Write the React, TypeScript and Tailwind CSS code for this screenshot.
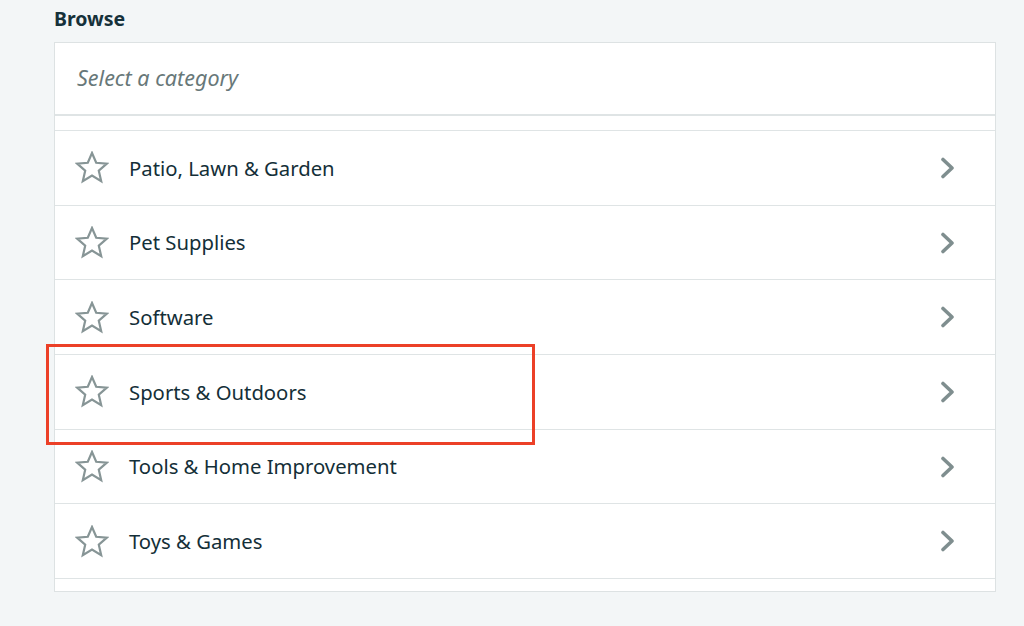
const categories = [
  "Patio, Lawn & Garden",
  "Pet Supplies",
  "Software",
  "Sports & Outdoors",
  "Tools & Home Improvement",
  "Toys & Games",
];

function StarIcon() {
  return (
    <svg width="34" height="33" viewBox="0 0 34 33" fill="none">
      <path
        d="M17 2l4.2 9.8 10.6.9-8 7 2.4 10.5L17 24.6 7.8 30.2l2.4-10.5-8-7 10.6-.9z"
        stroke="#879596"
        strokeWidth="2.2"
        strokeLinejoin="miter"
      />
    </svg>
  );
}

function Chevron() {
  return (
    <svg width="18" height="22" viewBox="0 0 18 22" fill="none">
      <path d="M4 2.5l9 8.5-9 8.5" stroke="#7f8e8f" strokeWidth="3.6" strokeLinecap="round" strokeLinejoin="round" />
    </svg>
  );
}

export default function App() {
  return (
    <div
      className="relative w-[1024px] h-[626px] bg-[#f3f6f7] overflow-hidden"
      style={{ fontFamily: '"Noto Sans", "Open Sans", sans-serif' }}
    >
      <div className="pl-[54px] pr-[28px] pt-[6px]">
        <h2 className="text-[19.5px] leading-[26px] font-bold text-[#16313a] mb-[10px]">Browse</h2>
        <div className="border border-[#dde2e3] bg-white">
          <div className="h-[73px] flex items-center px-[22px] border-b-2 border-[#dfe4e5]">
            <span className="italic text-[21.5px] text-[#687879]">Select a category</span>
          </div>
          <div className="h-[14px]" />
          {categories.map((c) => (
            <div key={c} className="h-[74.7px] border-t border-[#dfe4e5] flex items-center pl-[20px] pr-[38px]">
              <StarIcon />
              <span className="ml-[20px] text-[20.3px] text-[#142f38] flex-1">{c}</span>
              <Chevron />
            </div>
          ))}
          <div className="h-[13px] border-t border-[#dfe4e5]" />
        </div>
      </div>
      <div className="absolute left-[46px] top-[344px] w-[489px] h-[101px] border-[3px] border-[#ec4027] pointer-events-none" />
    </div>
  );
}
